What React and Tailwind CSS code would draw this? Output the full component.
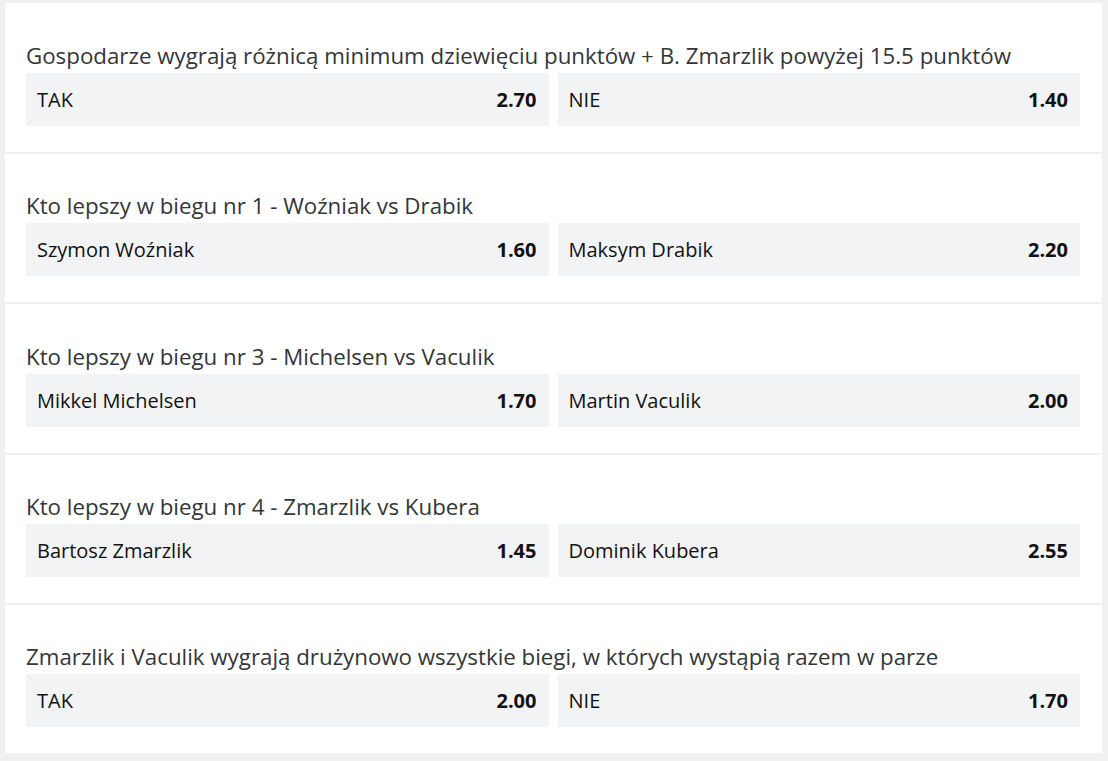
import React from 'react'

const markets = [
  {
    title: 'Gospodarze wygrają różnicą minimum dziewięciu punktów + B. Zmarzlik powyżej 15.5 punktów',
    options: [
      { label: 'TAK', odds: '2.70' },
      { label: 'NIE', odds: '1.40' },
    ],
    h: 'h-[149px]',
  },
  {
    title: 'Kto lepszy w biegu nr 1 - Woźniak vs Drabik',
    options: [
      { label: 'Szymon Woźniak', odds: '1.60' },
      { label: 'Maksym Drabik', odds: '2.20' },
    ],
    h: 'h-[148px]',
  },
  {
    title: 'Kto lepszy w biegu nr 3 - Michelsen vs Vaculik',
    options: [
      { label: 'Mikkel Michelsen', odds: '1.70' },
      { label: 'Martin Vaculik', odds: '2.00' },
    ],
    h: 'h-[149px]',
  },
  {
    title: 'Kto lepszy w biegu nr 4 - Zmarzlik vs Kubera',
    options: [
      { label: 'Bartosz Zmarzlik', odds: '1.45' },
      { label: 'Dominik Kubera', odds: '2.55' },
    ],
    h: 'h-[148px]',
  },
  {
    title: 'Zmarzlik i Vaculik wygrają drużynowo wszystkie biegi, w których wystąpią razem w parze',
    options: [
      { label: 'TAK', odds: '2.00' },
      { label: 'NIE', odds: '1.70' },
    ],
    h: 'h-[148px]',
  },
]

function Market({ market }) {
  return (
    <div className={`${market.h} bg-white flex flex-col justify-end px-[21px] pb-[26px]`}>
      <h3 className="text-[22.3px] leading-[28px] text-[#333638] mb-[3px]">{market.title}</h3>
      <div className="grid grid-cols-2 gap-[9px] mr-px">
        {market.options.map((opt) => (
          <button
            key={opt.label}
            className="h-[53px] bg-[#f2f3f5] flex items-center justify-between pl-[11px] pr-[12px] text-[20px] text-[#111]"
          >
            <span>{opt.label}</span>
            <span className="font-bold">{opt.odds}</span>
          </button>
        ))}
      </div>
    </div>
  )
}

export default function App() {
  return (
    <div
      className="w-[1108px] h-[761px] bg-[#eff0f2] pt-[3px] pl-[5px] pr-[6px]"
      style={{ fontFamily: '"Open Sans", "Noto Sans", sans-serif' }}
    >
      <div className="flex flex-col gap-[2px]">
        {markets.map((m) => (
          <Market key={m.title} market={m} />
        ))}
      </div>
    </div>
  )
}
